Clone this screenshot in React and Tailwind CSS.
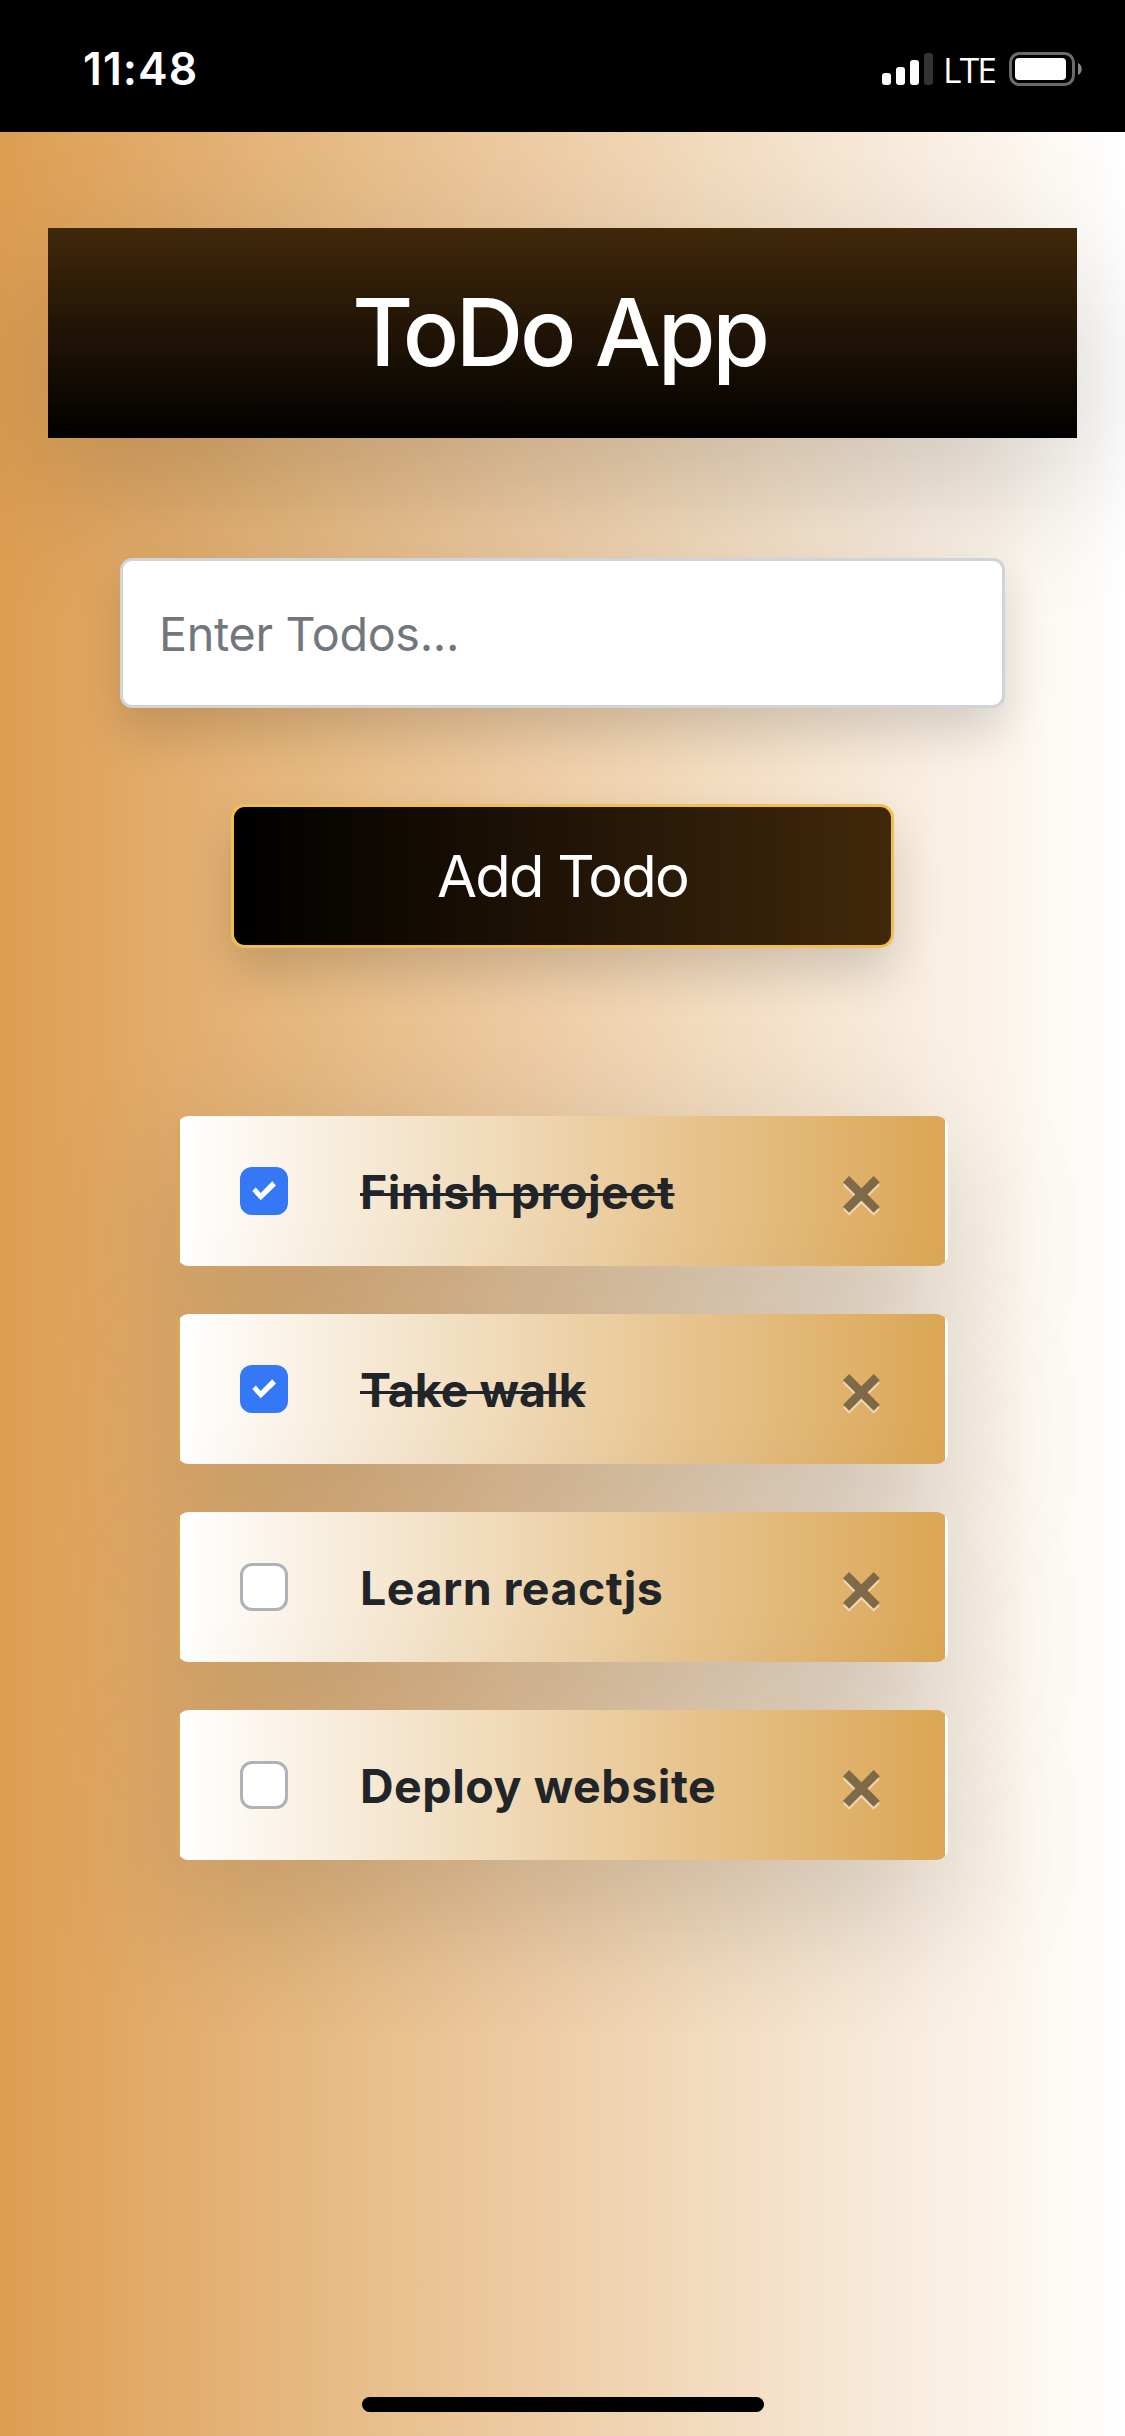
import React, { useState } from "react";

const initialTodos = [
  { id: 1, text: "Finish project", done: true, tracking: "tracking-[0.48px]" },
  { id: 2, text: "Take walk", done: true, tracking: "tracking-[0.05px]" },
  { id: 3, text: "Learn reactjs", done: false, tracking: "tracking-[0.48px]" },
  { id: 4, text: "Deploy website", done: false, tracking: "tracking-[0.54px]" },
];

function Battery() {
  return (
    <svg className="ml-[12px] mt-[52px] h-[34px] w-[74px]" viewBox="0 0 74 34" fill="none">
      <rect x="1.5" y="1.5" width="63" height="31" rx="9" stroke="#6b6b6b" strokeWidth="3" />
      <rect x="6" y="6" width="51" height="22" rx="4" fill="#fff" />
      <path d="M69 11 C74 13 74 21 69 23 Z" fill="#858585" />
    </svg>
  );
}

function StatusBar() {
  return (
    <header className="relative z-10 flex h-[132px] items-start bg-black text-white">
      <span className="ml-[83px] mt-[39px] text-[44.5px] font-semibold leading-[60px] tracking-[1.1px]">
        11:48
      </span>
      <div className="ml-auto mr-[42px] flex items-start">
        <div className="mt-[53px] flex h-[32px] items-end gap-[5px]">
          <i className="h-[12px] w-[9px] rounded-[3px] bg-white" />
          <i className="h-[18px] w-[9px] rounded-[3px] bg-white" />
          <i className="h-[25px] w-[9px] rounded-[3px] bg-white" />
          <i className="h-[32px] w-[9px] rounded-[3px] bg-[#333]" />
        </div>
        <span className="ml-[10px] mt-[49px] w-[54px] font-['Open_Sans',sans-serif] text-[35.4px] font-medium leading-[40px] tracking-[-1.8px]">
          LTE
        </span>
        <Battery />
      </div>
    </header>
  );
}

function Checkbox({ checked, onToggle }) {
  return (
    <button
      role="checkbox"
      aria-checked={checked}
      onClick={onToggle}
      className={
        checked
          ? "size-[48px] shrink-0 rounded-[12px] bg-[#3478f6]"
          : "size-[48px] shrink-0 rounded-[12px] border-3 border-[#afb2b8] bg-white"
      }
    >
      {checked && (
        <svg viewBox="0 0 48 48" className="size-[48px]">
          <path d="M12.3 24 L15.8 20.6 L20.7 26 L32.2 14.3 L36 18.6 L20.7 33.3 Z" fill="#fff" />
        </svg>
      )}
    </button>
  );
}

function TodoItem({ todo, onToggle, onRemove }) {
  return (
    <li className="flex h-[150px] items-center rounded-[12px] border-x-3 border-transparent bg-[linear-gradient(to_right,#ffffff,#dba655)] pl-[60px] pr-[65px] shadow-[0_48px_144px_rgba(0,0,0,0.175)]">
      <Checkbox checked={todo.done} onToggle={onToggle} />
      <span
        className={`ml-[72px] mt-[2px] text-[46.5px] font-bold leading-[72px] text-[#212529] ${todo.tracking} ${
          todo.done ? "line-through decoration-3" : ""
        }`}
      >
        {todo.text}
      </span>
      <button aria-label="Remove" onClick={onRemove} className="ml-auto mt-[10px] opacity-50">
        <svg viewBox="0 0 37 40" className="h-[40px] w-[37px]" strokeWidth="8.6">
          <path d="M3.1 6.1 L33.7 36.7 M33.7 6.1 L3.1 36.7" stroke="#fff" />
          <path d="M3.1 3.1 L33.7 33.7 M33.7 3.1 L3.1 33.7" stroke="#212529" />
        </svg>
      </button>
    </li>
  );
}

export default function App() {
  const [todos, setTodos] = useState(initialTodos);
  const [text, setText] = useState("");

  const toggle = (id) =>
    setTodos(todos.map((t) => (t.id === id ? { ...t, done: !t.done } : t)));
  const add = () => {
    if (!text.trim()) return;
    setTodos([...todos, { id: Date.now(), text, done: false, tracking: "tracking-[0.48px]" }]);
    setText("");
  };

  return (
    <div className="flex h-[2436px] w-[1125px] flex-col overflow-hidden bg-[linear-gradient(to_right,#dd9e52,#ffffff)] font-[Inter,sans-serif]">
      <StatusBar />
      <main className="flex flex-1 flex-col items-center">
        <div className="mt-[96px] flex h-[210px] w-[1029px] items-center justify-center bg-[linear-gradient(to_bottom,#41280b,#000000)] shadow-[0_48px_144px_rgba(0,0,0,0.175)]">
          <h1 className="mb-[2px] mr-[6px] text-[93.5px] font-medium leading-[112px] tracking-[-3.3px] text-white">
            ToDo App
          </h1>
        </div>
        <input
          value={text}
          onChange={(e) => setText(e.target.value)}
          placeholder="Enter Todos..."
          className="mt-[120px] h-[150px] w-[885px] rounded-[12px] border-3 border-[#d0d3d8] bg-white px-[36px] pt-[2px] text-[46.7px] tracking-[-0.31px] text-[#212529] shadow-[0_24px_48px_rgba(0,0,0,0.15)] placeholder:text-[#72777e]"
        />
        <button
          onClick={add}
          className="mt-[96px] h-[144px] w-[663px] rounded-[14px] border-3 border-[#f0bf4e] bg-[linear-gradient(to_right,#000000,#41280b)] text-[58px] tracking-[-1.8px] text-white shadow-[0_24px_48px_rgba(0,0,0,0.15)]"
        >
          Add Todo
        </button>
        <ul className="mt-[168px] flex w-[771px] flex-col gap-[48px]">
          {todos.map((t) => (
            <TodoItem
              key={t.id}
              todo={t}
              onToggle={() => toggle(t.id)}
              onRemove={() => setTodos(todos.filter((x) => x.id !== t.id))}
            />
          ))}
        </ul>
        <div className="mb-[24px] mt-auto h-[15px] w-[402px] rounded-full bg-black" />
      </main>
    </div>
  );
}
